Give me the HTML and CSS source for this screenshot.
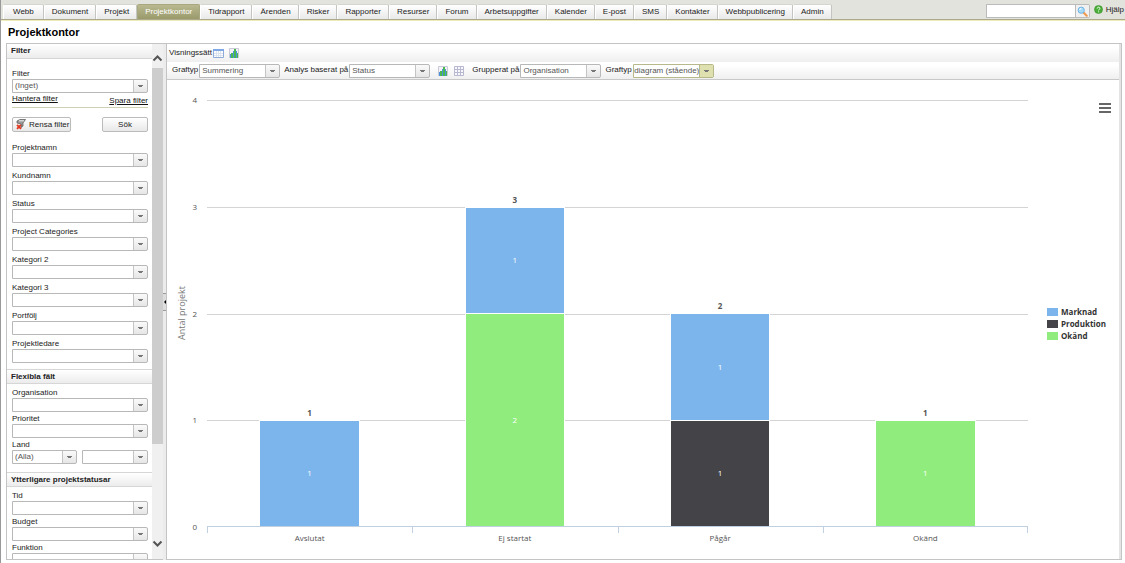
FILE: index.html
```html
<!DOCTYPE html>
<html lang="sv">
<head>
<meta charset="utf-8">
<title>Projektkontor</title>
<link rel="stylesheet" href="styles.css">
</head>
<body>
<header class="topbar">
  <nav class="tabs">
    <a class="tab" href="#">Webb</a><a class="tab" href="#">Dokument</a><a class="tab" href="#">Projekt</a><a class="tab tab-active" href="#">Projektkontor</a><a class="tab" href="#">Tidrapport</a><a class="tab" href="#">Ärenden</a><a class="tab" href="#">Risker</a><a class="tab" href="#">Rapporter</a><a class="tab" href="#">Resurser</a><a class="tab" href="#">Forum</a><a class="tab" href="#">Arbetsuppgifter</a><a class="tab" href="#">Kalender</a><a class="tab" href="#">E-post</a><a class="tab" href="#">SMS</a><a class="tab" href="#">Kontakter</a><a class="tab" href="#">Webbpublicering</a><a class="tab" href="#">Admin</a>
  </nav>
  <form class="search">
    <input class="search-input" type="text" aria-label="Sök i systemet">
    <button class="search-button" type="button" aria-label="Sök i systemet">
      <svg width="11" height="11" viewBox="0 0 11 11"><path d="M6.5 6.5l3.2 3.2" stroke="#f09a50" stroke-width="2.2" stroke-linecap="round"/><circle cx="4.2" cy="4.2" r="3.1" fill="#a9dcf8" stroke="#6fb4e4"/><path d="M2.6 4a1.8 1.8 0 0 1 1.8-1.6" stroke="#fff" fill="none"/></svg>
    </button>
  </form>
  <a class="help" href="#">
    <svg width="9" height="9" viewBox="0 0 9 9"><circle cx="4.5" cy="4.5" r="4" fill="#48b036" stroke="#3a8f2c" stroke-width=".6"/><path d="M3.2 3.500c0-1.800 2.700-1.700 2.700-.1 0 1-1.300 1-1.300 2M4.600 6.400v.9" stroke="#fff" fill="none"/></svg>
    Hjälp
  </a>
</header>

<h1 class="page-title">Projektkontor</h1>

<main class="workspace">
  <aside class="sidebar">
    <form class="filters">
      <h2 class="section">Filter</h2>
      <div class="group group-filter">
        <label class="label" for="filter">Filter</label>
        <span class="combo"><select id="filter"><option>(Inget)</option></select></span>
        <div class="links"><a href="#">Hantera filter</a><a class="save" href="#">Spara filter</a></div>
        <div class="actions">
          <button class="btn" type="button"><svg width="11" height="11" viewBox="0 0 11 11"><path d="M1 2l3-1.500h5.500l-2.500 3.500v3l-2 1.500V5L1 4z" fill="#999" stroke="#555" stroke-width=".7"/><path d="M3 1.800h5" stroke="#eee"/><path d="M1 5.800l4 4M5 5.800l-4 4" stroke="#e23a22" stroke-width="1.900"/></svg>Rensa filter</button>
          <button class="btn btn-search" type="button">Sök</button>
        </div>
      </div>
      <div class="group">
        <label class="label" for="namn">Projektnamn</label><span class="combo"><select id="namn"><option></option></select></span>
        <label class="label" for="kund">Kundnamn</label><span class="combo"><select id="kund"><option></option></select></span>
        <label class="label" for="status">Status</label><span class="combo"><select id="status"><option></option></select></span>
        <label class="label" for="cat">Project Categories</label><span class="combo"><select id="cat"><option></option></select></span>
        <label class="label" for="kat2">Kategori 2</label><span class="combo"><select id="kat2"><option></option></select></span>
        <label class="label" for="kat3">Kategori 3</label><span class="combo"><select id="kat3"><option></option></select></span>
        <label class="label" for="port">Portfölj</label><span class="combo"><select id="port"><option></option></select></span>
        <label class="label" for="ledare">Projektledare</label><span class="combo"><select id="ledare"><option></option></select></span>
      </div>
      <h2 class="section">Flexibla fält</h2>
      <div class="group group-dense">
        <label class="label" for="org">Organisation</label><span class="combo"><select id="org"><option></option></select></span>
        <label class="label" for="prio">Prioritet</label><span class="combo"><select id="prio"><option></option></select></span>
        <label class="label" for="land">Land</label>
        <div class="pair"><span class="combo"><select id="land"><option>(Alla)</option></select></span><span class="combo"><select aria-label="Land, värde"><option></option></select></span></div>
      </div>
      <h2 class="section">Ytterligare projektstatusar</h2>
      <div class="group group-dense">
        <label class="label" for="tid">Tid</label><span class="combo"><select id="tid"><option></option></select></span>
        <label class="label" for="budget">Budget</label><span class="combo"><select id="budget"><option></option></select></span>
        <label class="label" for="funktion">Funktion</label><span class="combo"><select id="funktion"><option></option></select></span>
      </div>
    </form>
    <div class="scrollbar">
      <svg width="11" height="24" viewBox="0 0 11 24"><path d="M1.500 16.500l4-4 4 4" fill="none" stroke="#555" stroke-width="2"/></svg>
      <div class="thumb"></div>
      <svg class="down" width="11" height="24" viewBox="0 0 11 24"><path d="M1.500 6.500l4 4 4-4" fill="none" stroke="#555" stroke-width="2"/></svg>
    </div>
  </aside>
  <div class="splitter"><button class="collapse" type="button" aria-label="Dölj filter"></button></div>

  <section class="content">
    <div class="bar">
      <span class="bar-label">Visningssätt</span>
      <svg class="icon" width="11" height="11" viewBox="0 0 11 11"><path d="M.5 1.500h10v8H.5z" fill="#fff" stroke="#8fabdc"/><path d="M0 1h11v2H0z" fill="#7fa8e6"/><path d="M1 5.500h9M1 7.500h9M3.500 3v6M5.500 3v6M7.500 3v6" stroke="#d4deee" stroke-width=".8"/></svg>
      <svg class="icon icon-view" width="10" height="10" viewBox="0 0 10 10"><path d="M.5.5h9v9h-9z" fill="#f2f2f8" stroke="#c9c9d8"/><rect x="1" y="6" width="1" height="4" fill="#4b91dc"/><rect x="2" y="5" width="2" height="5" fill="#4cb850"/><rect x="4" y="3" width="1" height="7" fill="#4b91dc"/><rect x="5" y="1" width="2" height="9" fill="#4cb850"/><rect x="7" y="3" width="1" height="7" fill="#4b91dc"/><rect x="8" y="5" width="1" height="5" fill="#4cb850"/></svg>
    </div>
    <div class="bar bar-options">
      <label for="typ">Graftyp</label><span class="combo"><select id="typ"><option>Summering</option></select></span>
      <label class="gap" for="analys">Analys baserat på</label><span class="combo"><select id="analys"><option>Status</option></select></span>
      <svg class="icon icon-chart" width="10" height="10" viewBox="0 0 10 10"><path d="M.5.5h9v9h-9z" fill="#f2f2f8" stroke="#c9c9d8"/><rect x="1" y="6" width="1" height="4" fill="#4b91dc"/><rect x="2" y="5" width="2" height="5" fill="#4cb850"/><rect x="4" y="3" width="1" height="7" fill="#4b91dc"/><rect x="5" y="1" width="2" height="9" fill="#4cb850"/><rect x="7" y="3" width="1" height="7" fill="#4b91dc"/><rect x="8" y="5" width="1" height="5" fill="#4cb850"/></svg>
      <svg class="icon icon-grid" width="10" height="10" viewBox="0 0 10 10"><path d="M.5.5h9v9h-9zM3.500 0v10M6.500 0v10M0 3.500h10M0 6.500h10" fill="#f7f7fc" stroke="#b8b8d0"/></svg>
      <label class="gap" for="grupp">Grupperat på</label><span class="combo"><select id="grupp"><option>Organisation</option></select></span>
      <label class="gap" for="diagram">Graftyp</label><span class="combo combo-hot"><select id="diagram"><option>Stapeldiagram (stående)</option></select></span>
    </div>
    <div class="chart">
      <div class="y-title">Antal projekt</div>
      <div class="y-axis"><span>4</span><span>3</span><span>2</span><span>1</span><span>0</span></div>
      <div class="plot">
        <div class="gridlines"><i></i><i></i><i></i><i></i></div>
        <div class="columns">
          <div class="column"><b>1</b><span class="seg blue" style="height:25%">1</span></div>
          <div class="column"><b>3</b><span class="seg blue" style="height:25%">1</span><span class="seg green" style="height:50%">2</span></div>
          <div class="column"><b>2</b><span class="seg blue" style="height:25%">1</span><span class="seg dark" style="height:25%">1</span></div>
          <div class="column"><b>1</b><span class="seg green" style="height:25%">1</span></div>
        </div>
      </div>
      <div class="side">
        <button class="menu" type="button" aria-label="Diagrammeny"></button>
        <ul class="legend">
          <li><i class="swatch blue"></i>Marknad</li>
          <li><i class="swatch dark"></i>Produktion</li>
          <li><i class="swatch green"></i>Okänd</li>
        </ul>
      </div>
      <div class="x-axis"><span>Avslutat</span><span>Ej startat</span><span>Pågår</span><span>Okänd</span></div>
    </div>
  </section>
</main>
</body>
</html>
```
FILE: styles.css
```css
* { box-sizing: border-box; }
body {
  margin: 0;
  height: 100vh;
  display: flex;
  flex-direction: column;
  overflow: hidden;
  border-left: 1px solid #999;
  background: #fff;
  color: #222;
  font: 8px/10px "Liberation Sans", Arial, sans-serif;
}
button, input, select { font: inherit; color: inherit; margin: 0; }
a { color: inherit; }
svg { display: block; flex: none; }

.topbar {
  display: flex;
  flex: none;
  height: 21px;
  padding: 4px 0 0 2px;
  background: #e3e3dd;
  border-bottom: 1px solid #edebb9;
  box-shadow: inset 0 -1px #aaa98c;
}
.tabs { display: flex; height: 15px; }
.tab {
  padding: 2px 7px 0;
  border: 1px solid #c4c4c0;
  border-left-color: #fff;
  border-top-color: #d4d4d0;
  border-bottom: 0;
  border-radius: 2px 2px 0 0;
  background: linear-gradient(#fff, #e9e9e9);
  text-decoration: none;
  white-space: nowrap;
}
.tab:first-child { padding: 2px 9px 0; }
.tab-active { background: linear-gradient(#b9b88f, #999a6c); border-color: #a8a880; color: #fff; }
.search { display: flex; margin: 0 4px 0 auto; height: 14px; }
.search-input { width: 90px; border: 1px solid #bbb; background: #fff; padding: 0 2px; }
.search-button {
  width: 14px;
  display: grid;
  place-items: center;
  padding: 0;
  border: 1px solid #bbb;
  border-left: 0;
  border-radius: 0 2px 2px 0;
  background: #f1f1f1;
}
.help { display: flex; gap: 3px; padding: 1px 1px 0 0; text-decoration: none; }

.page-title { margin: 0; padding: 5px 7px; font-size: 11px; line-height: 12px; color: #000; }

.workspace { flex: 1; min-height: 0; display: flex; padding: 0 3px 3px 5px; }
.sidebar { display: flex; width: 157px; border: 1px solid #c4c4c4; border-right: 0; }
.filters { flex: 1; overflow: hidden; margin: 0; }
.section {
  margin: 0;
  padding: 1px 4px;
  height: 15px;
  font-size: 8px;
  line-height: 12px;
  border-bottom: 1px solid #d6d6d6;
  background: linear-gradient(#fff, #ececec);
}
.section ~ .section { border-top: 1px solid #d6d6d6; }
.group { padding: 0 4px 0 5px; margin-bottom: 6px; }
.group .label { display: block; height: 10px; }
.group > .combo { margin-bottom: 4px; }
.group-filter { padding-top: 10px; margin-bottom: 11px; }
.group-filter > .combo { margin-bottom: 1px; }
.group-dense { padding-top: 4px; margin-bottom: 8px; }
.group-dense > .combo { margin-bottom: 2px; }

.combo { display: block; position: relative; height: 14px; }
.combo select {
  display: block;
  width: 100%;
  height: 14px;
  padding: 0 14px 0 2px;
  appearance: none;
  border: 1px solid #b8b8b8;
  border-radius: 0 2px 2px 0;
  background: linear-gradient(#fff, #fff) left / calc(100% - 14px) 100% no-repeat, linear-gradient(#fafafa, #e6e6e6);
  color: #555;
}
.combo::after {
  content: "";
  position: absolute;
  right: 1px;
  top: 1px;
  width: 13px;
  height: 12px;
  border-left: 1px solid #c4c4c4;
  background: linear-gradient(#777, #777) center 5px / 5px 1px no-repeat, linear-gradient(#777, #777) center 6px / 3px 1px no-repeat;
  pointer-events: none;
}
.pair { display: grid; grid-template-columns: 65px 1fr; gap: 5px; }

.links { display: flex; justify-content: space-between; height: 14px; color: #111; border-bottom: 1px solid #cfd0b4; }
.links .save { padding-top: 2px; }
.actions { display: flex; justify-content: space-between; align-items: center; padding-top: 9px; }
.btn {
  display: flex;
  align-items: center;
  gap: 2px;
  height: 15px;
  padding: 0 1px 0 3px;
  border: 1px solid #bbb;
  border-radius: 2px;
  background: linear-gradient(#fff, #e8e8e8);
  white-space: nowrap;
}
.btn-search { width: 46px; justify-content: center; padding: 0; }

.scrollbar { display: flex; flex-direction: column; width: 11px; background: #f0f0f0; }
.thumb { flex: 0 0 73%; background: #cdcdcd; }
.scrollbar .down { margin-top: auto; }
.splitter { display: grid; align-items: center; width: 3px; background: #ececec; border-top: 1px solid #c4c4c4; }
.collapse {
  display: grid;
  place-items: center;
  width: 3px;
  height: 18px;
  padding: 0;
  border: solid #999;
  border-width: 1px 0;
  background: #ddd;
}
.collapse::before { content: ""; border: 2px solid transparent; border-right-color: #000; border-left: 0; }

.content {
  flex: 1;
  min-width: 0;
  display: flex;
  flex-direction: column;
  border: 1px solid #c4c4c4;
  box-shadow: inset -2px 0 #e4e4e4;
  padding-right: 2px;
}
.bar { display: flex; flex: none; align-items: center; height: 18px; padding-left: 2px; background: linear-gradient(#fff 20%, #efefef); white-space: nowrap; }
.bar-options { padding-left: 5px; border-bottom: 1px solid #c8c8c8; }
.bar-options label { padding-bottom: 2px; }
.icon { margin-left: 1px; }
.icon-view { margin-left: 5px; }
.bar .combo { width: 81px; margin-left: 1px; }
.bar .gap { margin-left: 4px; }
.bar .icon-chart { margin-left: 8px; }
.bar .icon-grid { margin: 0 4px 0 6px; }
.combo-hot select { text-indent: -22px; padding: 0 13px 0 0; border-color: #b8b98a; }
.combo-hot::after { background-color: #dfe0b0; border-color: #b8b98a; }

.chart {
  flex: 1;
  min-height: 0;
  display: grid;
  grid-template: 1fr 32px / 20px 20px 1fr 91px;
  padding-top: 20px;
  font: 8px/10px "Open Sans", "Noto Sans", sans-serif;
  color: #555;
}
.y-title { writing-mode: vertical-rl; transform: rotate(180deg); text-align: center; justify-self: end; font-size: 9px; color: #777; }
.y-axis { display: flex; flex-direction: column; justify-content: space-between; margin: -5px 0; padding-right: 10px; text-align: right; }
.plot { display: grid; }
.gridlines, .columns { grid-area: 1 / 1; display: flex; }
.gridlines { flex-direction: column; }
.gridlines i { flex: 1; border-top: 1px solid #d4d4d4; }
.columns { border-bottom: 1px solid #c0d0e0; }
.column { flex: 1; display: flex; flex-direction: column; align-items: center; justify-content: flex-end; }
.column b { margin-bottom: 2px; }
.seg { display: grid; place-items: center; width: 49%; border: 1px solid #fff; border-bottom: 0; color: #fff; }
.blue { background: #7cb5ec; }
.green { background: #90ed7d; }
.dark { background: #434348; }
.side { display: flex; flex-direction: column; }
.menu {
  align-self: flex-end;
  width: 12px;
  height: 10px;
  margin: 3px 8px 0 0;
  padding: 0;
  border: 0;
  background: repeating-linear-gradient(#666 0 2px, #fff 2px 4px);
}
.legend { margin: auto 0; padding: 8px 0 0 19px; list-style: none; font-weight: bold; color: #333; }
.legend li { display: flex; align-items: center; gap: 3px; height: 12px; }
.swatch { width: 11px; height: 8px; }
.x-axis {
  grid-column: 3;
  display: flex;
  background: linear-gradient(#c0d0e0, #c0d0e0) right top / 1px 6px no-repeat;
}
.x-axis span { flex: 1; padding-top: 6px; text-align: center; background: linear-gradient(#c0d0e0, #c0d0e0) left top / 1px 6px no-repeat; }
```
